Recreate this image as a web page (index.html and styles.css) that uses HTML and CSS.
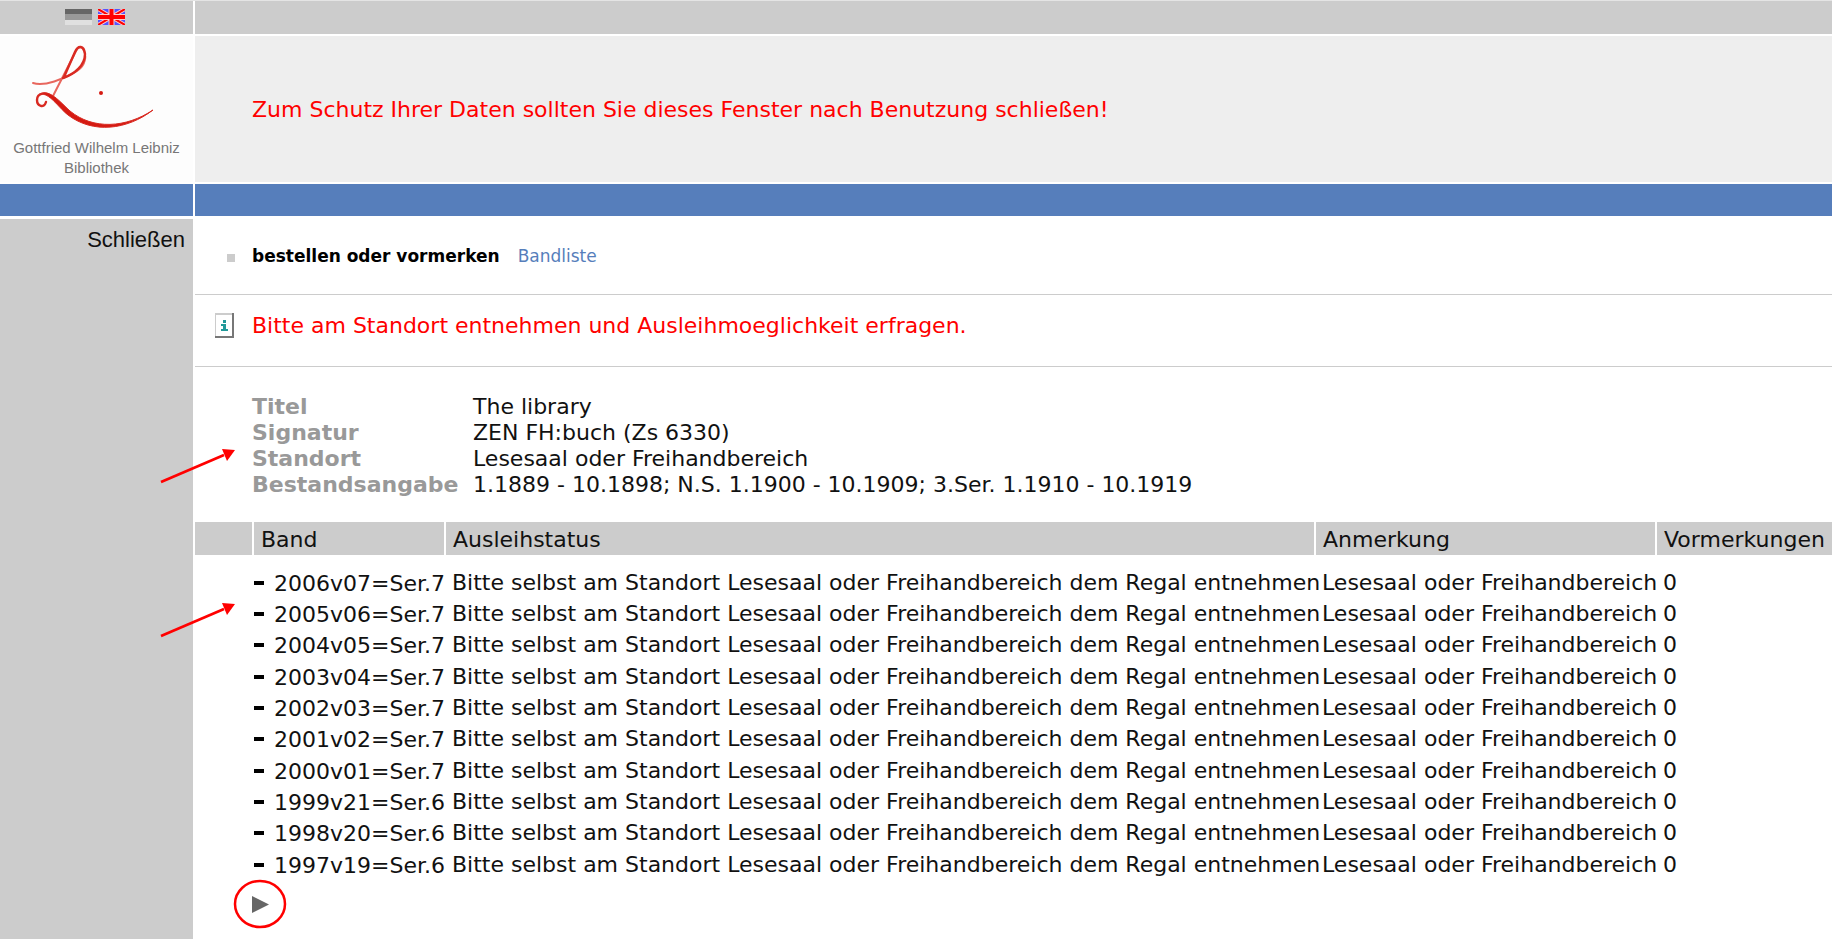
FILE: index.html
```html
<!DOCTYPE html>
<html lang="de">
<head>
<meta charset="utf-8">
<title>Gottfried Wilhelm Leibniz Bibliothek</title>
<link rel="stylesheet" href="styles.css">
</head>
<body>
<div class="page">
  <div class="langs">
    <a href="#" aria-label="Deutsch"><svg class="flag" viewBox="0 0 27 16"><path fill="#666" d="M0 0h27v5H0z"/><path fill="#999" d="M0 5h27v6H0z"/><path fill="#e0e0e0" d="M0 11h27v5H0z"/></svg></a>
    <a href="#" aria-label="English"><svg class="flag" viewBox="0 0 27 16"><path fill="#55f" d="M0 0h27v16H0z"/><path stroke="#fcc" stroke-width="4" d="M0 0l27 16M27 0L0 16"/><path stroke="#f00" stroke-width="2" d="M0 0l27 16M27 0L0 16"/><path stroke="#fcc" stroke-width="6" d="M13.5 0v16M0 8h27"/><path stroke="#f00" stroke-width="4" d="M13.5 0v16M0 8h27"/></svg></a>
  </div>
  <div class="topbar"></div>
  <div class="brand">
    <svg class="logo" viewBox="0 0 124 86" fill="none" stroke="#d92a22" stroke-linecap="round">
      <path stroke="#e8675e" stroke-width="2" d="M1 39C12 43 32 35 45 27C54 21 55 11 51 5C49 2 46 3 44 7L21 52"/>
      <path stroke-width="2.4" d="M32 33L43 8C46 1 52 1 53 10C53 21 43 30 31 34"/>
      <path stroke-width="2.4" d="M14 58C12 65 5 62 5 56C5 49 14 47 20 53"/>
      <path fill="#d51a12" stroke-width="1" d="M8 50C18 45 27 57 38 67C61 86 94 84 121 66C95 86 61 90 36 71C25 62 18 49 8 50Z"/>
      <circle cx="69" cy="49" r="2" fill="#d51a12" stroke="none"/>
    </svg>
    <p class="brand-name">Gottfried Wilhelm Leibniz<br>Bibliothek</p>
  </div>
  <header class="banner">Zum Schutz Ihrer Daten sollten Sie dieses Fenster nach Benutzung schließen!</header>
  <div class="stripe"></div>
  <div class="stripe"></div>
  <nav class="side"><a href="#">Schließen</a></nav>
  <main class="main">
    <div class="tabs">
      <span class="gutter"><i class="bullet"></i></span>
      <strong>bestellen oder vormerken</strong>
      <a href="#">Bandliste</a>
    </div>
    <div class="notice">
      <span class="gutter"><svg class="info" viewBox="0 0 19 25"><path fill="#777" d="M0 0h19v25H0z"/><path fill="#ccc" d="M0 0h17v23H0z"/><path fill="#fff" d="M1 2h16v21H1z"/><path fill="#299" d="M8 7h3v3H8zM6 11h5v5h2v2H6v-2h2v-3H6z"/></svg></span>
      <p>Bitte am Standort entnehmen und Ausleihmoeglichkeit erfragen.</p>
    </div>
    <dl class="details">
      <dt>Titel</dt><dd>The library</dd>
      <dt>Signatur</dt><dd>ZEN FH:buch (Zs 6330)</dd>
      <dt>Standort</dt><dd>Lesesaal oder Freihandbereich</dd>
      <dt>Bestandsangabe</dt><dd>1.1889 - 10.1898; N.S. 1.1900 - 10.1909; 3.Ser. 1.1910 - 10.1919</dd>
    </dl>
    <table class="volumes">
      <colgroup><col class="c-blank"><col class="c-band"><col class="c-status"><col class="c-note"><col></colgroup>
      <thead><tr><td></td><th>Band</th><th>Ausleihstatus</th><th>Anmerkung</th><th>Vormerkungen</th></tr></thead>
      <tbody>
        <tr><td></td><td class="band"><b></b>2006v07=Ser.7</td><td>Bitte selbst am Standort Lesesaal oder Freihandbereich dem Regal entnehmen</td><td>Lesesaal oder Freihandbereich</td><td>0</td></tr>
        <tr><td></td><td class="band"><b></b>2005v06=Ser.7</td><td>Bitte selbst am Standort Lesesaal oder Freihandbereich dem Regal entnehmen</td><td>Lesesaal oder Freihandbereich</td><td>0</td></tr>
        <tr><td></td><td class="band"><b></b>2004v05=Ser.7</td><td>Bitte selbst am Standort Lesesaal oder Freihandbereich dem Regal entnehmen</td><td>Lesesaal oder Freihandbereich</td><td>0</td></tr>
        <tr><td></td><td class="band"><b></b>2003v04=Ser.7</td><td>Bitte selbst am Standort Lesesaal oder Freihandbereich dem Regal entnehmen</td><td>Lesesaal oder Freihandbereich</td><td>0</td></tr>
        <tr><td></td><td class="band"><b></b>2002v03=Ser.7</td><td>Bitte selbst am Standort Lesesaal oder Freihandbereich dem Regal entnehmen</td><td>Lesesaal oder Freihandbereich</td><td>0</td></tr>
        <tr><td></td><td class="band"><b></b>2001v02=Ser.7</td><td>Bitte selbst am Standort Lesesaal oder Freihandbereich dem Regal entnehmen</td><td>Lesesaal oder Freihandbereich</td><td>0</td></tr>
        <tr><td></td><td class="band"><b></b>2000v01=Ser.7</td><td>Bitte selbst am Standort Lesesaal oder Freihandbereich dem Regal entnehmen</td><td>Lesesaal oder Freihandbereich</td><td>0</td></tr>
        <tr><td></td><td class="band"><b></b>1999v21=Ser.6</td><td>Bitte selbst am Standort Lesesaal oder Freihandbereich dem Regal entnehmen</td><td>Lesesaal oder Freihandbereich</td><td>0</td></tr>
        <tr><td></td><td class="band"><b></b>1998v20=Ser.6</td><td>Bitte selbst am Standort Lesesaal oder Freihandbereich dem Regal entnehmen</td><td>Lesesaal oder Freihandbereich</td><td>0</td></tr>
        <tr><td></td><td class="band"><b></b>1997v19=Ser.6</td><td>Bitte selbst am Standort Lesesaal oder Freihandbereich dem Regal entnehmen</td><td>Lesesaal oder Freihandbereich</td><td>0</td></tr>
      </tbody>
    </table>
    <button class="next" type="button" aria-label="Weiter"><svg viewBox="0 0 17 17"><path fill="#666" d="M0 0l17 8.5L0 17z"/></svg></button>
    <svg class="mark mark-details" viewBox="0 0 76 36"><path stroke="#f00" stroke-width="2.6" d="M1 34L64 7"/><path fill="#f00" d="M75 2L62 1L67 13z"/></svg>
    <svg class="mark mark-volumes" viewBox="0 0 76 36"><path stroke="#f00" stroke-width="2.6" d="M1 34L64 7"/><path fill="#f00" d="M75 2L62 1L67 13z"/></svg>
    <svg class="mark mark-next" viewBox="0 0 54 50"><ellipse cx="27" cy="25" rx="25" ry="23" fill="none" stroke="#f00" stroke-width="2.5"/></svg>
  </main>
</div>
</body>
</html>
```
FILE: styles.css
```css
* { box-sizing: border-box; }
body {
  margin: 0;
  background: #fff;
  color: #111;
  font: 22px/26px Verdana, "DejaVu Sans", sans-serif;
}
p, dl, dd { margin: 0; }
a { text-decoration: none; }
svg { display: block; }
.page {
  display: grid;
  grid-template-columns: 193px 1fr;
  grid-template-rows: 33px 146px 32px 1fr;
  gap: 2px;
  min-height: 100vh;
  border-top: 1px solid #e4e4e4;
  overflow: hidden;
}
.langs, .topbar, .side { background: #ccc; }
.langs { display: flex; gap: 6px; padding: 8px 0 0 65px; }
.flag { width: 27px; height: 16px; }
.brand { padding: 8px 8px 0; background: #fdfdfd; }
.logo { width: 124px; height: 86px; margin-left: 24px; }
.brand-name {
  padding-top: 8px;
  color: #777;
  font: 15px/20px "Liberation Sans", sans-serif;
  text-align: center;
  white-space: nowrap;
}
.banner {
  display: flex;
  align-items: center;
  padding: 2px 0 0 57px;
  background: #eee;
  color: #f00;
}
.stripe { background: #567ebb; }
.side {
  margin-top: 1px;
  padding: 8px 8px 0 0;
  font-family: "Liberation Sans", sans-serif;
  text-align: right;
}
.side a { color: #111; }
.main { position: relative; white-space: nowrap; }
.gutter { flex: none; width: 57px; }
.tabs {
  display: flex;
  align-items: center;
  height: 77px;
  border-bottom: 1px solid #ccc;
  font-size: 17px;
}
.tabs strong { color: #000; }
.tabs a { margin-left: 18px; color: #567ebb; }
.bullet { display: block; width: 8px; height: 8px; margin: 4px 0 0 32px; background: #ccc; }
.notice {
  display: flex;
  align-items: center;
  height: 72px;
  padding-bottom: 10px;
  border-bottom: 1px solid #ccc;
  color: #f00;
}
.info { width: 19px; height: 25px; margin-left: 20px; }
.details {
  display: grid;
  grid-template-columns: 221px 1fr;
  padding: 27px 0 24px 57px;
}
.details dt { color: #999; font-weight: bold; }
.volumes { width: 100%; table-layout: fixed; border-spacing: 0; }
.c-blank { width: 57px; }
.c-band { width: 192px; }
.c-status { width: 870px; }
.c-note { width: 341px; }
.volumes th, .volumes td { padding: 0 0 0 8px; font-weight: normal; text-align: left; }
.volumes thead tr { height: 33px; background: #ccc; }
.volumes th { padding: 3px 0 0 7px; border-left: 2px solid #fff; }
.volumes tbody tr { height: 31px; }
.volumes tbody tr:nth-child(3n) { height: 32px; }
.volumes tbody .band { padding: 2px 0 0 2px; }
.volumes tbody tr:first-child { height: 43px; }
.volumes tbody tr:first-child td { padding-top: 12px; }
.volumes tbody tr:first-child .band { padding-top: 14px; }
.band b {
  display: inline-block;
  width: 10px;
  height: 4px;
  margin-right: 10px;
  background: #000;
  vertical-align: 6px;
}
.next {
  display: block;
  margin: 16px 0 0 57px;
  padding: 0;
  border: 0;
  background: none;
}
.next svg { width: 17px; height: 17px; }
.mark { position: absolute; pointer-events: none; }
.mark-details, .mark-volumes { left: -35px; width: 76px; height: 36px; }
.mark-details { top: 230px; }
.mark-volumes { top: 384px; }
.mark-next { left: 38px; top: 661px; width: 54px; height: 50px; }
```
